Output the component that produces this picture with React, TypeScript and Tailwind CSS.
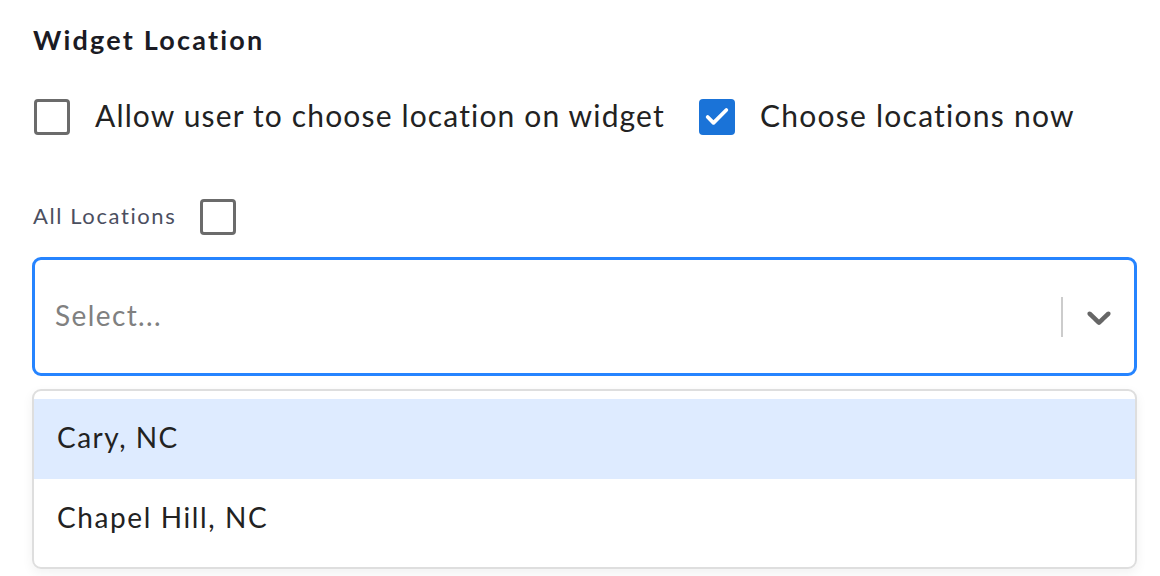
import React from 'react';
import { Check } from 'lucide-react';

const Box: React.FC<{ checked?: boolean }> = ({ checked }) =>
  checked ? (
    <span className="w-[36px] h-[36px] rounded-[4px] bg-[#1a73d8] flex items-center justify-center shrink-0">
      <Check size={28} strokeWidth={3.2} className="text-white" />
    </span>
  ) : (
    <span className="block w-[36px] h-[36px] rounded-[4px] border-[3px] border-[#6b6b6b] bg-white shrink-0" />
  );

const Chevron = () => (
  <svg width="40" height="40" viewBox="0 0 20 20" className="ml-[16px] fill-[#666]">
    <path d="M4.516 7.548c0.436-0.446 1.043-0.481 1.576 0l3.908 3.747 3.908-3.747c0.533-0.481 1.141-0.446 1.574 0 0.436 0.445 0.408 1.197 0 1.615-0.406 0.418-4.695 4.502-4.695 4.502-0.217 0.223-0.502 0.335-0.787 0.335s-0.57-0.112-0.789-0.335c0 0-4.287-4.084-4.695-4.502s-0.436-1.17 0-1.615z" />
  </svg>
);

export default function App() {
  return (
    <div className="w-[1160px] h-[576px] bg-white overflow-hidden font-['Lato',sans-serif] text-[#222]">
      <div className="pl-[32px] pr-[23px] pt-[22px]">
        <h2 className="pl-[1px] text-[27px] font-bold tracking-[2.2px] text-[#1b1b24] leading-[36px]">Widget Location</h2>

        <div className="flex items-center mt-[41px] h-[36px] pl-[2px]">
          <Box />
          <span className="ml-[25px] text-[30px] tracking-[1.15px] text-[#222] leading-none -mt-[4px]">Allow user to choose location on widget</span>
          <span className="ml-[34px] flex"><Box checked /></span>
          <span className="ml-[25px] text-[30px] tracking-[1.25px] text-[#222] leading-none -mt-[4px]">Choose locations now</span>
        </div>

        <div className="flex items-center mt-[64px] h-[36px]">
          <span className="pl-[1px] text-[22px] tracking-[1.6px] text-[#4b4f5f] leading-none -mt-[2px]">All Locations</span>
          <span className="ml-[24px] flex"><Box /></span>
        </div>

        <div className="mt-[22px] h-[119px] border-[3px] border-[#2684ff] rounded-[9px] flex items-center pl-[20px] pr-[15px]">
          <span className="flex-1 text-[28px] tracking-[1.4px] text-[#808080] leading-none -mt-[3px]">Select...</span>
          <span className="w-[2px] h-[40px] bg-[#cccccc]" />
          <Chevron />
        </div>

        <div className="mt-[13px] border-2 border-[#dedede] rounded-[9px] py-[8px] shadow-[0_4px_12px_rgba(0,0,0,0.06)]">
          <div className="h-[80px] bg-[#deebff] flex items-center pl-[23px] text-[28px] tracking-[1.5px] text-[#222]">
            <span className="-mt-[4px]">Cary, NC</span>
          </div>
          <div className="h-[80px] flex items-center pl-[23px] text-[28px] tracking-[1.6px] text-[#222]">
            <span className="-mt-[4px]">Chapel Hill, NC</span>
          </div>
        </div>
      </div>
    </div>
  );
}
